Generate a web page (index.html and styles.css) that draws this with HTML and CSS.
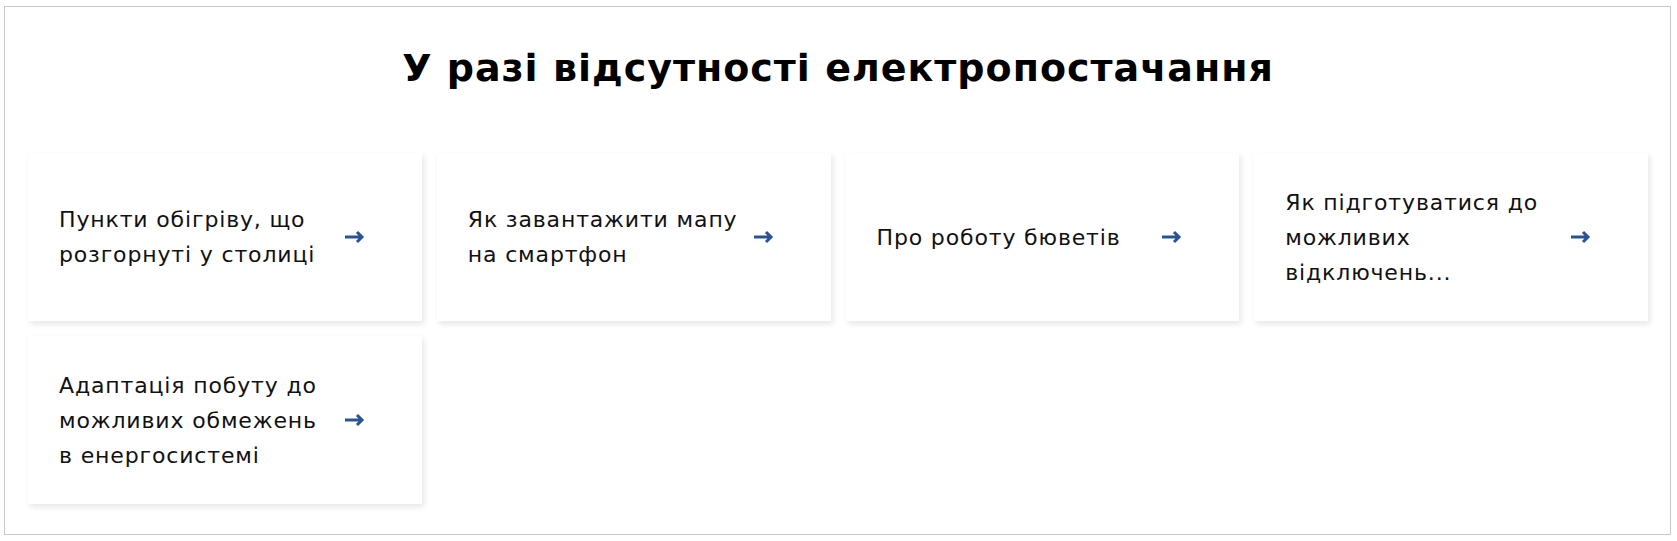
FILE: index.html
```html
<!DOCTYPE html>
<html lang="uk">
<head>
<meta charset="utf-8">
<link rel="stylesheet" href="styles.css">
</head>
<body>
<section class="frame">
  <h2 class="title">У разі відсутності електропостачання</h2>
  <div class="grid">
    <a class="card" href="#"><span class="card-text">Пункти обігріву, що розгорнуті у столиці</span><svg class="arrow" viewBox="0 0 21 14" width="21" height="14"><path d="M1 7H18M13 2l5 5-5 5" fill="none" stroke="#2a5395" stroke-width="3"/></svg></a>
    <a class="card" href="#"><span class="card-text">Як завантажити мапу на смартфон</span><svg class="arrow" viewBox="0 0 21 14" width="21" height="14"><path d="M1 7H18M13 2l5 5-5 5" fill="none" stroke="#2a5395" stroke-width="3"/></svg></a>
    <a class="card" href="#"><span class="card-text">Про роботу бюветів</span><svg class="arrow" viewBox="0 0 21 14" width="21" height="14"><path d="M1 7H18M13 2l5 5-5 5" fill="none" stroke="#2a5395" stroke-width="3"/></svg></a>
    <a class="card" href="#"><span class="card-text">Як підготуватися до можливих відключень...</span><svg class="arrow" viewBox="0 0 21 14" width="21" height="14"><path d="M1 7H18M13 2l5 5-5 5" fill="none" stroke="#2a5395" stroke-width="3"/></svg></a>
    <a class="card" href="#"><span class="card-text">Адаптація побуту до можливих обмежень в енергосистемі</span><svg class="arrow" viewBox="0 0 21 14" width="21" height="14"><path d="M1 7H18M13 2l5 5-5 5" fill="none" stroke="#2a5395" stroke-width="3"/></svg></a>
  </div>
</section>
</body>
</html>
```
FILE: styles.css
```css
* { box-sizing: border-box; }
html, body { margin: 0; background: #fff; }
body {
  padding: 6px 6px 6px 4px;
  font-family: "DejaVu Sans", "Noto Sans", sans-serif;
  color: #111;
}
.frame {
  border: 1px solid #c8c8c8;
  height: 529px;
  padding: 0 22px 0 23px;
}
.title {
  margin: 35px 0 0;
  text-align: center;
  font-size: 38px;
  line-height: 52px;
  font-weight: 700;
  letter-spacing: 1px;
  color: #000;
}
.grid {
  margin-top: 59px;
  display: grid;
  grid-template-columns: repeat(4, 1fr);
  gap: 15px;
}
.card {
  height: 168px;
  display: flex;
  align-items: center;
  padding: 0 57px 0 31px;
  background: #fff;
  box-shadow: 2px 3px 6px rgba(0, 0, 0, 0.1);
  text-decoration: none;
  color: #111;
}
.card-text {
  flex: 1;
  font-size: 22px;
  line-height: 35px;
  letter-spacing: 0.85px;
}
.arrow {
  flex: none;
  margin-left: 15px;
}
```
